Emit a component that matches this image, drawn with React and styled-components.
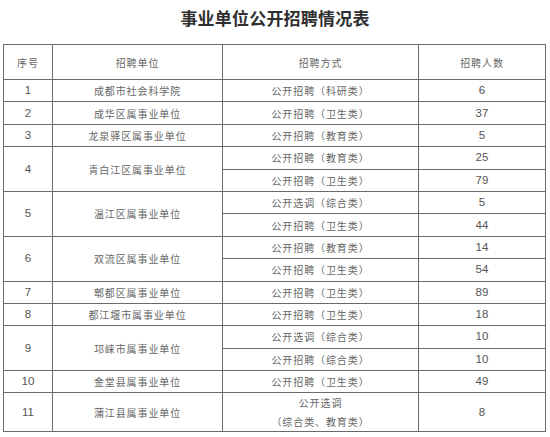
import React from 'react'
import styled, { createGlobalStyle } from 'styled-components'

const rows = [
    { no: '1', unit: '成都市社会科学院', items: [['公开招聘（科研类）', '6']] },
    { no: '2', unit: '成华区属事业单位', items: [['公开招聘（卫生类）', '37']] },
    { no: '3', unit: '龙泉驿区属事业单位', items: [['公开招聘（教育类）', '5']] },
    { no: '4', unit: '青白江区属事业单位', items: [['公开招聘（教育类）', '25'], ['公开招聘（卫生类）', '79']] },
    { no: '5', unit: '温江区属事业单位', items: [['公开选调（综合类）', '5'], ['公开招聘（卫生类）', '44']] },
    { no: '6', unit: '双流区属事业单位', items: [['公开招聘（教育类）', '14'], ['公开招聘（卫生类）', '54']] },
    { no: '7', unit: '郫都区属事业单位', items: [['公开招聘（卫生类）', '89']] },
    { no: '8', unit: '都江堰市属事业单位', items: [['公开招聘（卫生类）', '18']] },
    { no: '9', unit: '邛崃市属事业单位', items: [['公开选调（综合类）', '10'], ['公开招聘（综合类）', '10']] },
    { no: '10', unit: '金堂县属事业单位', items: [['公开招聘（卫生类）', '49']] },
]

const App = () => {
    return (
        <Page>
            <GlobalStyle />
            <Title>事业单位公开招聘情况表</Title>
            <Table>
                <colgroup>
                    <col style={{ width: 49 }} />
                    <col style={{ width: 170 }} />
                    <col style={{ width: 196 }} />
                    <col style={{ width: 127 }} />
                </colgroup>
                <thead>
                    <HeadRow>
                        <Cell>序号</Cell>
                        <Cell>招聘单位</Cell>
                        <Cell>招聘方式</Cell>
                        <Cell>招聘人数</Cell>
                    </HeadRow>
                </thead>
                <tbody>
                    {rows.map((r) =>
                        r.items.map((it, i) => (
                            <Row key={r.no + '-' + i}>
                                {i === 0 && <Num rowSpan={r.items.length}>{r.no}</Num>}
                                {i === 0 && <Cell rowSpan={r.items.length}>{r.unit}</Cell>}
                                <Cell>{it[0]}</Cell>
                                <Num>{it[1]}</Num>
                            </Row>
                        ))
                    )}
                    <TallRow>
                        <Num>11</Num>
                        <Cell>蒲江县属事业单位</Cell>
                        <Cell>
                            公开选调
                            <br />
                            （综合类、教育类）
                        </Cell>
                        <Num>8</Num>
                    </TallRow>
                </tbody>
            </Table>
        </Page>
    )
};

const GlobalStyle = createGlobalStyle`
    body {
        margin: 0;
        background: #fff;
    }
`;

const Page = styled.div`
    width: 550px;
    height: 437px;
    overflow: hidden;
    padding: 0 0 0 3px;
    box-sizing: border-box;
`;

const Title = styled.h1`
    margin: 0;
    height: 44px;
    line-height: 36px;
    text-align: center;
    font-family: "Noto Sans CJK SC", sans-serif;
    font-weight: bold;
    font-size: 17px;
    letter-spacing: 0.2px;
    color: #2f2f2f;
    padding-right: 3px;
`;

const Table = styled.table`
    border-collapse: collapse;
    table-layout: fixed;
    width: 542px;
    border: 1px solid #6a6a6a;
`;

const Row = styled.tr`
    height: 22.4px;
`;

const HeadRow = styled.tr`
    height: 35px;
`;

const TallRow = styled.tr`
    height: 39px;
`;

const Cell = styled.td`
    border: 1px solid #6a6a6a;
    padding: 0;
    text-align: center;
    vertical-align: middle;
    font-family: "Noto Sans CJK SC", sans-serif;
    font-size: 10px;
    letter-spacing: 0.9px;
    line-height: 19px;
    color: #666;
`;

const Num = styled(Cell)`
    font-family: "Liberation Sans", Arial, sans-serif;
    font-size: 11.5px;
    letter-spacing: 0;
    color: #555;
`;

export default App
